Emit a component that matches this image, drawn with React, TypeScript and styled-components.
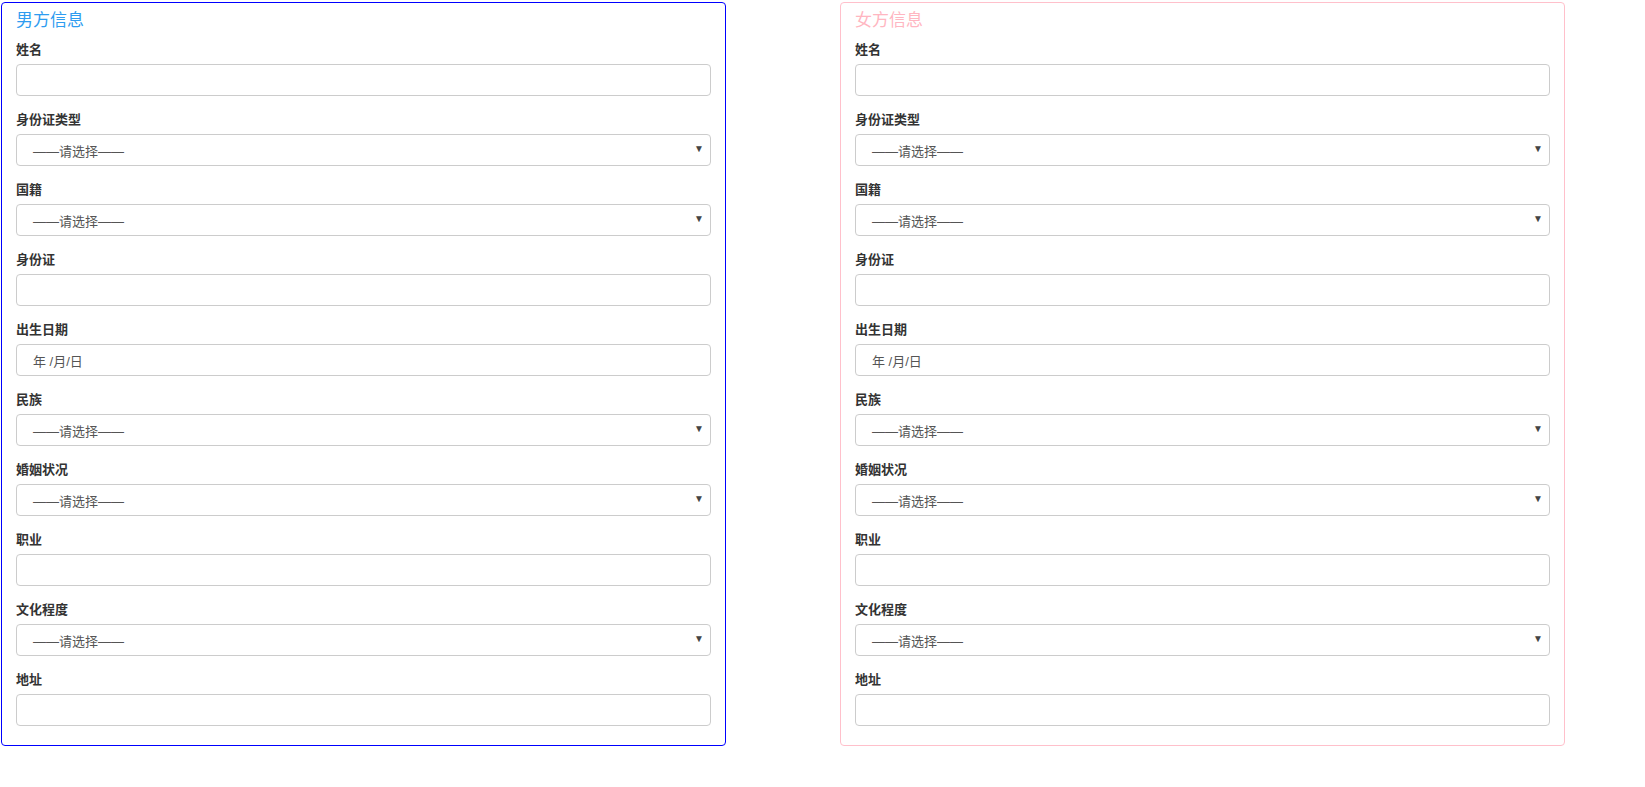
import React from "react";
import styled, { createGlobalStyle } from "styled-components";

const Global = createGlobalStyle`
  body { margin: 0; background: #fff; font-family: "Liberation Sans", "Noto Sans CJK SC", sans-serif; }
`;

const Page = styled.div`
  display: flex;
  gap: 114px;
  padding: 2px 0 0 1px;
`;

const Panel = styled.div<{ $c: string }>`
  width: 725px;
  height: 744px;
  box-sizing: border-box;
  border: 1px solid ${(p) => p.$c};
  border-radius: 4px;
  padding: 7px 14px 0 14px;
`;

const Title = styled.div<{ $c: string }>`
  color: ${(p) => p.$c};
  font-size: 17px;
  line-height: 22px;
  margin-bottom: 8px;
`;

const Group = styled.div`
  display: flex;
  flex-direction: column;
  gap: 5px;
  margin-bottom: 14px;
`;

const Label = styled.div`
  font-size: 13px;
  font-weight: bold;
  color: #333;
  line-height: 19px;
`;

const Box = styled.div`
  position: relative;
  height: 32px;
  box-sizing: border-box;
  border: 1px solid #ccc;
  border-radius: 4px;
  display: flex;
  align-items: center;
  padding-left: 16px;
  font-size: 13px;
  color: #555;
`;

const Arrow = styled.span`
  position: absolute;
  right: 6px;
  top: 8px;
  font-size: 10px;
  color: #444;
`;

type F = { label: string; kind: "text" | "select" | "date" };
const fields: F[] = [
  { label: "姓名", kind: "text" },
  { label: "身份证类型", kind: "select" },
  { label: "国籍", kind: "select" },
  { label: "身份证", kind: "text" },
  { label: "出生日期", kind: "date" },
  { label: "民族", kind: "select" },
  { label: "婚姻状况", kind: "select" },
  { label: "职业", kind: "text" },
  { label: "文化程度", kind: "select" },
  { label: "地址", kind: "text" },
];

function Form({ title, c, tc }: { title: string; c: string; tc: string }) {
  return (
    <Panel $c={c}>
      <Title $c={tc}>{title}</Title>
      {fields.map((f) => (
        <Group key={f.label}>
          <Label>{f.label}</Label>
          <Box>
            {f.kind === "select" && (
              <>
                ——请选择——<Arrow>▼</Arrow>
              </>
            )}
            {f.kind === "date" && <span>年 /月/日</span>}
          </Box>
        </Group>
      ))}
    </Panel>
  );
}

export default function App() {
  return (
    <>
      <Global />
      <Page>
        <Form title="男方信息" c="#0000ff" tc="#2e9cf0" />
        <Form title="女方信息" c="#ffc0cb" tc="#ffb6c1" />
      </Page>
    </>
  );
}
